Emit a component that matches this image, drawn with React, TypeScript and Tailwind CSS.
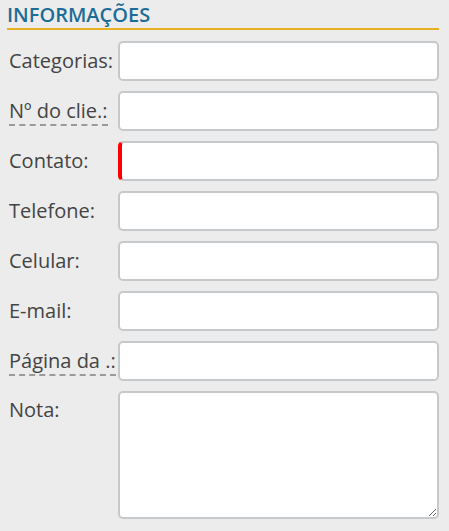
import React from "react";

const rows: { label: string; abbr?: boolean; red?: boolean }[] = [
  { label: "Categorias:" },
  { label: "Nº do clie.:", abbr: true },
  { label: "Contato:", red: true },
  { label: "Telefone:" },
  { label: "Celular:" },
  { label: "E-mail:" },
  { label: "Página da .:", abbr: true },
];

export default function App() {
  return (
    <div
      className="w-[449px] h-[531px] bg-[#ececec] pl-[7px] pr-[10px] pt-[2px]"
      style={{ fontFamily: '"Open Sans", sans-serif' }}
    >
      <div className="border-b-2 border-[#e8b020]">
        <h2 className="text-[20px] leading-[26px] font-semibold text-[#1c6c98]">INFORMAÇÕES</h2>
      </div>
      <div className="mt-[11px] flex flex-col gap-[10px]">
        {rows.map((r) => (
          <div key={r.label} className="flex items-center h-[40px]">
            <div className="w-[111px] pl-[2px] text-[20px] text-[#444444] leading-[26px] whitespace-nowrap">
              <span className={r.abbr ? "border-b-2 border-dashed border-[#9a9a9a]" : ""}>{r.label}</span>
            </div>
            <div
              className={
                "flex-1 h-[40px] bg-white rounded-[5px] border-2 border-[#c6c9cc] " +
                (r.red ? "border-l-[4px] border-l-[#ff0000]" : "")
              }
            />
          </div>
        ))}
        <div className="flex">
          <div className="w-[111px] pl-[2px] pt-[6px] text-[20px] text-[#444444] leading-[26px]">Nota:</div>
          <textarea className="flex-1 h-[128px] bg-white rounded-[5px] border-2 border-[#c6c9cc] resize-y outline-none" />
        </div>
      </div>
    </div>
  );
}
